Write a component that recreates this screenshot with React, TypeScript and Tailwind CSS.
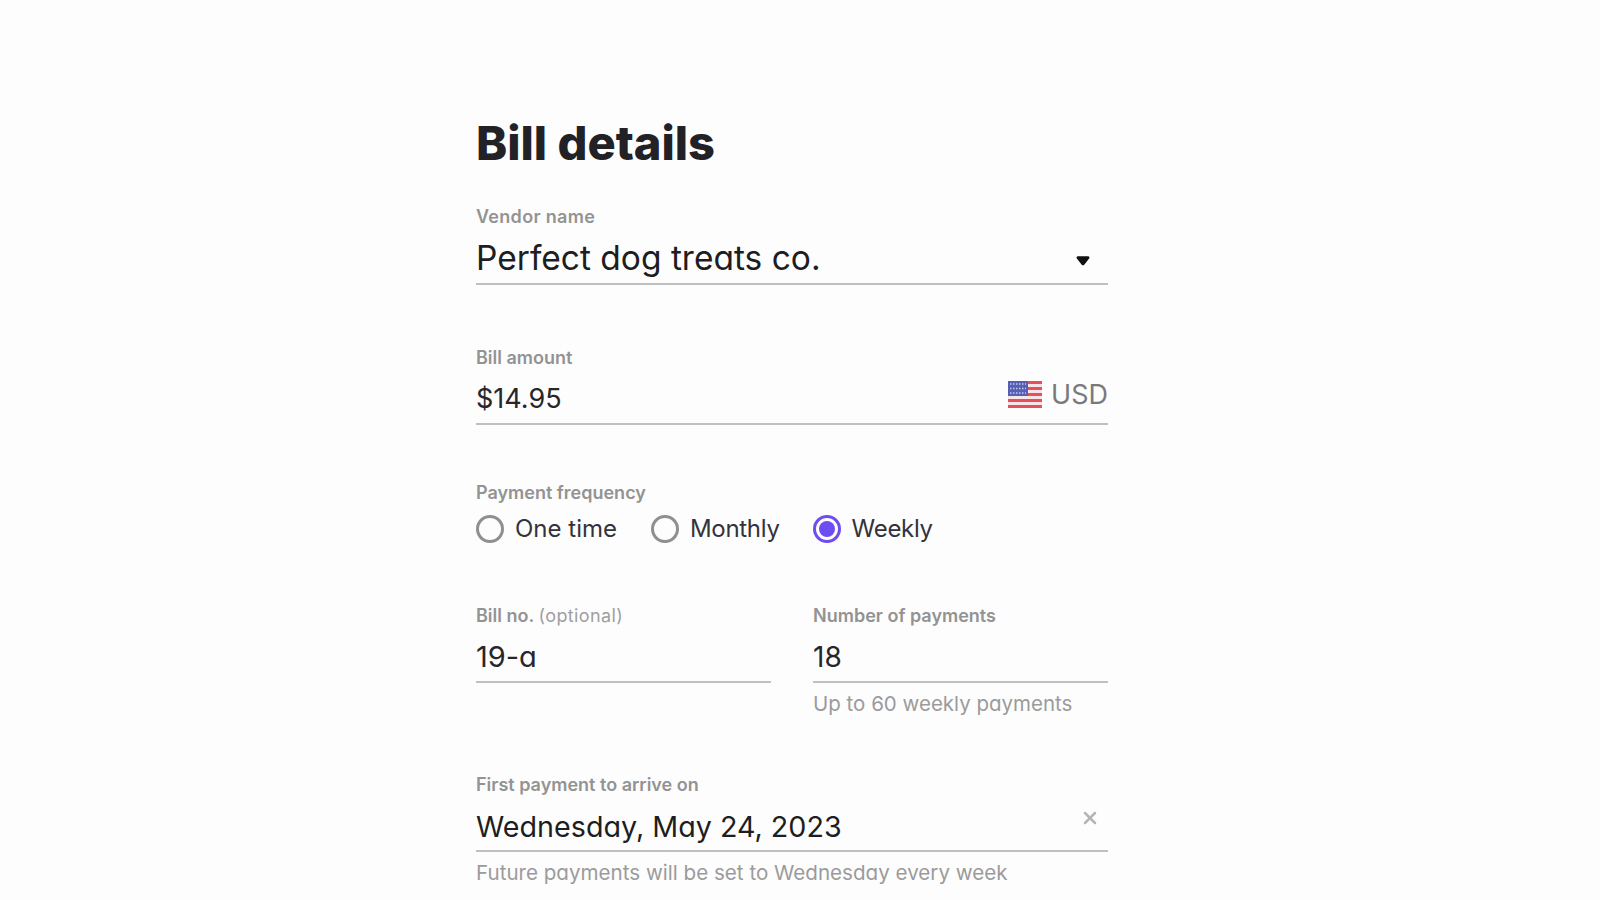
import { X } from 'lucide-react';

const font = "font-['Inter','Liberation_Sans',sans-serif]";

function FieldLabel({ children, className }: { children: React.ReactNode; className?: string }) {
  return <div className={`h-6 text-[18px] leading-6 font-semibold text-[#939393] ${className ?? ''}`}>{children}</div>;
}

function Flag() {
  return (
    <svg width="34" height="27" viewBox="0 0 34 27" className="shrink-0">
      <rect width="34" height="27" fill="#f6e4e6" />
      <rect y="0" width="34" height="3" fill="#e4505c" />
      <rect y="6" width="34" height="3" fill="#e4505c" />
      <rect y="12" width="34" height="3" fill="#e4505c" />
      <rect y="18" width="34" height="3" fill="#e4505c" />
      <rect y="24" width="34" height="3" fill="#e4505c" />
      <rect width="20" height="15" fill="#5560b4" />
      <path d="M2 3h16M2 7.5h16M2 12h16" stroke="#c3c8ec" strokeWidth="1.6" strokeDasharray="1.5 1.5" />
    </svg>
  );
}

function Caret() {
  return (
    <svg width="14" height="11" viewBox="0 0 13 10" className="mt-[8px]">
      <path d="M1.8 1C0.6 1 .1 2.2.8 3.1l4.5 5.8c.6.8 1.8.8 2.4 0l4.5-5.8c.7-.9.2-2.1-1-2.1z" fill="#111" />
    </svg>
  );
}

function Radio({ label, checked, className }: { label: string; checked?: boolean; className?: string }) {
  return (
    <div className="flex items-center gap-[11px]">
      {checked ? (
        <span className="flex h-[28px] w-[28px] items-center justify-center rounded-full border-[3px] border-[#6d4df0]">
          <span className="h-4 w-4 rounded-full bg-[#6d4df0]" />
        </span>
      ) : (
        <span className="h-[28px] w-[28px] rounded-full border-[3px] border-[#8f8f8f]" />
      )}
      <span className={`text-[24px] leading-8 text-[#33333b] [font-feature-settings:'cv11'] ${className ?? ''}`}>{label}</span>
    </div>
  );
}

export default function App() {
  return (
    <div className={`h-screen overflow-hidden bg-[#fdfdfd] ${font}`}>
      <div className="ml-[476px] w-[632px] pt-[113px]">
        <h1 className="h-[60px] text-[47px] leading-[60px] font-extrabold text-[#222226]">Bill details</h1>

        <div className="mt-[32px]">
          <FieldLabel className="tracking-[0.3px]">Vendor name</FieldLabel>
          <div className="flex h-[56px] items-center justify-between border-b-2 border-[#c0c0c2] pr-[18px]">
            <span className="mt-[4px] text-[33.5px] leading-10 text-[#1d1d22] [font-feature-settings:'cv11']">Perfect dog treats co.</span>
            <Caret />
          </div>
        </div>

        <div className="mt-[61px]">
          <FieldLabel>Bill amount</FieldLabel>
          <div className="flex h-[55px] items-center justify-between border-b-2 border-[#c0c0c2]">
            <span className="mt-[5px] text-[27px] leading-9 text-[#26262b]">$14.95</span>
            <div className="flex items-center gap-[9px] pb-[4px]">
              <Flag />
              <span className="text-[27px] leading-9 text-[#7a7a7c]">USD</span>
            </div>
          </div>
        </div>

        <div className="mt-[56px]">
          <FieldLabel>Payment frequency</FieldLabel>
          <div className="mt-[8px] flex">
            <div className="mr-[34px]">
              <Radio label="One time" />
            </div>
            <div className="mr-[33px]">
              <Radio label="Monthly" className="tracking-[-0.3px]" />
            </div>
            <Radio label="Weekly" checked className="tracking-[-0.3px]" />
          </div>
        </div>

        <div className="mt-[59px] grid grid-cols-2 gap-x-[42px]">
          <div>
            <FieldLabel>
              Bill no. <span className="font-normal tracking-[0.4px] text-[#a0a0a0]">(optional)</span>
            </FieldLabel>
            <div className="flex h-[55px] items-center border-b-2 border-[#c0c0c2]">
              <span className="mt-[5px] text-[29px] leading-9 text-[#26262b] [font-feature-settings:'cv11']">19-a</span>
            </div>
          </div>
          <div>
            <FieldLabel>Number of payments</FieldLabel>
            <div className="flex h-[55px] items-center border-b-2 border-[#c0c0c2]">
              <span className="mt-[5px] text-[28px] leading-9 text-[#26262b]">18</span>
            </div>
            <div className="mt-[7px] text-[20.5px] leading-7 text-[#9b9b9b] [font-feature-settings:'cv11']">Up to 60 weekly payments</div>
          </div>
        </div>

        <div className="mt-[55px]">
          <FieldLabel>First payment to arrive on</FieldLabel>
          <div className="flex h-[55px] items-center justify-between border-b-2 border-[#c0c0c2] pr-[8px]">
            <span className="mt-[6px] text-[28.7px] leading-9 text-[#1d1d22] [font-feature-settings:'cv11']">Wednesday, May 24, 2023</span>
            <X size={20} strokeWidth={3} className="mb-[11px] text-[#b5b5b5]" />
          </div>
          <div className="mt-[7px] text-[20.6px] leading-7 text-[#9b9b9b] [font-feature-settings:'cv11']">Future payments will be set to Wednesday every week</div>
        </div>
      </div>
    </div>
  );
}
